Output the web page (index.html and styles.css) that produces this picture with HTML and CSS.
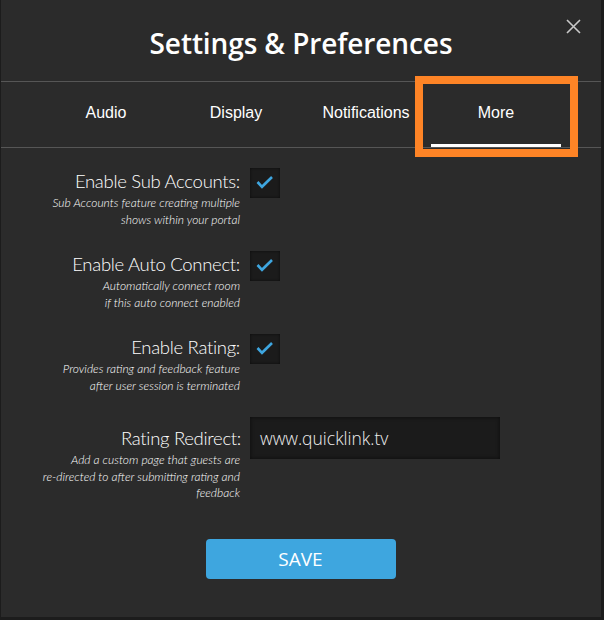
FILE: index.html
```html
<!DOCTYPE html>
<html>
<head>
<meta charset="utf-8">
<link rel="stylesheet" href="styles.css">
</head>
<body>
<div class="modal">
  <header class="head">
    <h1 class="title">Settings &amp; Preferences</h1>
    <button class="close" aria-label="Close">
      <svg width="15" height="15" viewBox="0 0 15 15"><path d="M1 1L14 14M14 1L1 14" stroke="#c8c8c8" stroke-width="1.6" fill="none"/></svg>
    </button>
  </header>
  <nav class="tabs">
    <div class="tab">Audio</div>
    <div class="tab">Display</div>
    <div class="tab">Notifications</div>
    <div class="tab active">More</div>
  </nav>
  <div class="highlight"></div>
  <main class="content">
    <div class="row">
      <div class="lbl">
        <div class="name">Enable Sub Accounts:</div>
        <div class="desc">Sub Accounts feature creating multiple<br>shows within your portal</div>
      </div>
      <div class="check"><svg width="30" height="30" viewBox="0 0 30 30"><path d="M7.5 14L12 18.8L22 9" stroke="#3ea6e0" stroke-width="2.6" fill="none"/></svg></div>
    </div>
    <div class="row">
      <div class="lbl">
        <div class="name">Enable Auto Connect:</div>
        <div class="desc">Automatically connect room<br>if this auto connect enabled</div>
      </div>
      <div class="check"><svg width="30" height="30" viewBox="0 0 30 30"><path d="M7.5 14L12 18.8L22 9" stroke="#3ea6e0" stroke-width="2.6" fill="none"/></svg></div>
    </div>
    <div class="row">
      <div class="lbl">
        <div class="name">Enable Rating:</div>
        <div class="desc">Provides rating and feedback feature<br>after user session is terminated</div>
      </div>
      <div class="check"><svg width="30" height="30" viewBox="0 0 30 30"><path d="M7.5 14L12 18.8L22 9" stroke="#3ea6e0" stroke-width="2.6" fill="none"/></svg></div>
    </div>
    <div class="row">
      <div class="lbl lbl-input">
        <div class="name name-input">Rating Redirect:</div>
        <div class="desc">Add a custom page that guests are<br>re-directed to after submitting rating and<br>feedback</div>
      </div>
      <div class="field">www.quicklink.tv</div>
    </div>
    <div class="actions">
      <button class="save">SAVE</button>
    </div>
  </main>
</div>
</body>
</html>
```

FILE: styles.css
```css
html, body {
  margin: 0;
  padding: 0;
  background: #1c1c1c;
}
body {
  width: 604px;
  height: 620px;
  overflow: hidden;
  font-family: "Open Sans", "Noto Sans", sans-serif;
  color: #fff;
}
.modal {
  position: relative;
  margin-left: 1px;
  width: 600px;
  height: 617px;
  background: #2b2b2b;
}
.head {
  height: 81px;
  border-bottom: 1px solid #565656;
  display: flex;
  align-items: center;
  justify-content: center;
}
.title {
  margin: 4px 0 0 0;
  font-size: 28px;
  font-weight: 600;
  color: #fff;
  letter-spacing: -0.1px;
}
.close {
  position: absolute;
  top: 19px;
  left: 565px;
  width: 15px;
  height: 15px;
  padding: 0;
  border: 0;
  background: none;
  display: block;
}
.close svg { display: block; }
.tabs {
  display: flex;
  padding-left: 40px;
  height: 65px;
  border-bottom: 1px solid #565656;
}
.tab {
  width: 130px;
  height: 65px;
  display: flex;
  align-items: center;
  justify-content: center;
  font-family: "Liberation Sans", Arial, sans-serif;
  font-size: 16px;
  color: #fff;
  box-sizing: border-box;
  padding-bottom: 3px;
}
.tab.active {
  position: relative;
}
.tab.active::after {
  content: "";
  position: absolute;
  left: 0;
  right: 0;
  bottom: 0;
  height: 3px;
  background: #fff;
}
.highlight {
  position: absolute;
  left: 414px;
  top: 76px;
  width: 147px;
  height: 65px;
  border: 8px solid #fe8426;
}
.content {
  padding-top: 20px;
}
.row {
  display: grid;
  grid-template-columns: 239px 250px;
  column-gap: 10px;
  height: 83px;
  align-items: start;
}
.lbl {
  text-align: right;
}
.name {
  font-family: "Lato", "Open Sans", sans-serif;
  font-size: 18.5px;
  font-weight: 300;
  letter-spacing: -0.3px;
  line-height: 27px;
  color: #fff;
  white-space: nowrap;
}
.name-input {
  margin-top: 8px;
  margin-right: -1px;
}
.desc {
  font-family: "Lato", "Open Sans", sans-serif;
  font-size: 12px;
  font-style: italic;
  font-weight: 300;
  line-height: 16.5px;
  color: #fff;
  white-space: nowrap;
}
.check {
  width: 30px;
  height: 30px;
  background: #1b1b1b;
  box-shadow: inset 0 0 3px rgba(0,0,0,0.6);
}
.check svg { display: block; }
.field {
  width: 250px;
  height: 42px;
  box-sizing: border-box;
  padding-left: 10px;
  background: #1b1b1b;
  box-shadow: inset 0 0 4px rgba(0,0,0,0.6);
  font-size: 17.5px;
  font-weight: 300;
  line-height: 42px;
  color: #eeeeee;
}
.actions {
  display: flex;
  justify-content: center;
  padding-top: 39px;
  padding-right: 1px;
}
.save {
  width: 190px;
  height: 40px;
  border: 0;
  border-radius: 4px;
  background: #3ea6df;
  color: #fff;
  font-family: "Open Sans", "Noto Sans", sans-serif;
  font-size: 19px;
  font-weight: 400;
}
```
